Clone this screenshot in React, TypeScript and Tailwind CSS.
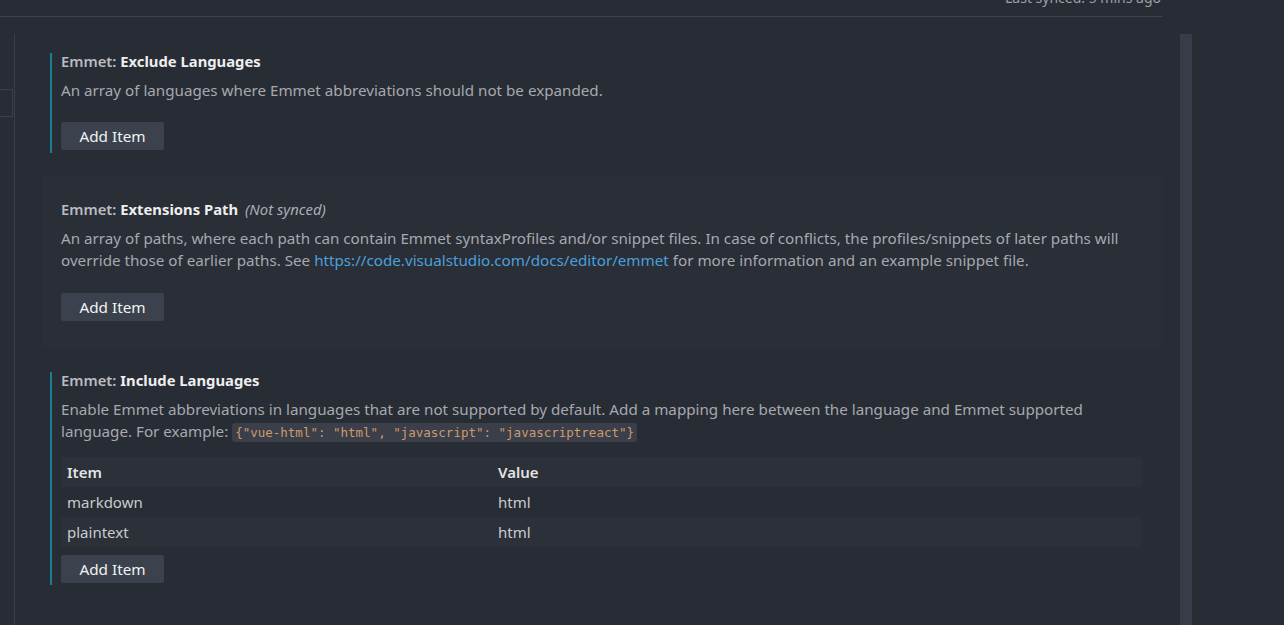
import React from "react";

const font = { fontFamily: '"Noto Sans", "Open Sans", sans-serif' };

const AddButton = () => (
  <button className="h-[28px] w-[103px] rounded-[2px] bg-[#3b414d] text-[15.3px] text-[#f2f2f2]">
    Add Item
  </button>
);

const Title = ({ name, extra }: { name: string; extra?: string }) => (
  <div className="h-[18px] text-[14.8px] font-semibold leading-[17px]">
    <span className="text-[#b9bcc2]">Emmet: </span>
    <span className="font-bold text-[#eeeeee]">{name}</span>
    {extra && <span className="ml-[7px] font-normal italic text-[#a9adb3]">{extra}</span>}
  </div>
);

const rows = [
  { item: "markdown", value: "html" },
  { item: "plaintext", value: "html" },
];

export default function App() {
  return (
    <div
      className="relative h-[625px] w-[1284px] overflow-hidden bg-[#282c34] text-[15.2px] text-[#a6a9af]"
      style={font}
    >
      {/* sync header */}
      <div className="h-[17px] w-[1162px] overflow-hidden border-b border-[#40444f]">
        <div className="-mt-[11px] pr-[1px] text-right text-[14px] leading-[18px] text-[#9da0a6]">
          Last synced: 5 mins ago
        </div>
      </div>

      <div className="flex h-full">
        {/* toc edge */}
        <div className="mt-[17px] w-[15px] shrink-0 border-r border-[#3a3e4a]">
          <div className="mt-[55px] h-[28px] w-[13px] border-y border-r border-[#3a3e4a]" />
        </div>

        {/* settings list */}
        <div className="w-[1165px] shrink-0 pl-[27px] pr-[17px] pt-[12px]">
          {/* exclude languages */}
          <div className="px-[8px] py-[24px]">
            <div className="flex h-[100px] flex-col border-l-2 border-[#1b7d99] pl-[9px]">
              <Title name="Exclude Languages" />
              <div className="mt-[8px] leading-[22px]">
                An array of languages where Emmet abbreviations should not be expanded.
              </div>
              <div className="mt-[21px]">
                <AddButton />
              </div>
            </div>
          </div>

          {/* extensions path */}
          <div className="bg-[#2a2e37] px-[8px] py-[24px]">
            <div className="flex h-[123px] flex-col border-l-2 border-transparent pl-[9px]">
              <Title name="Extensions Path" extra="(Not synced)" />
              <div className="mt-[8px] whitespace-nowrap leading-[22px]">
                An array of paths, where each path can contain Emmet syntaxProfiles and/or snippet files. In case of
                conflicts, the profiles/snippets of later paths will
                <br />
                override those of earlier paths. See{" "}
                <span className="text-[#4aa0dc]">https://code.visualstudio.com/docs/editor/emmet</span> for more
                information and an example snippet file.
              </div>
              <div className="mt-[22px]">
                <AddButton />
              </div>
            </div>
          </div>

          {/* include languages */}
          <div className="px-[8px] py-[24px]">
            <div className="flex h-[213px] flex-col border-l-2 border-[#1b7d99] pl-[9px]">
              <Title name="Include Languages" />
              <div className="mt-[8px] whitespace-nowrap leading-[22px]">
                Enable Emmet abbreviations in languages that are not supported by default. Add a mapping here between
                the language and Emmet supported
                <br />
                language. For example:{" "}
                <code
                  className="rounded-[3px] bg-[#3a3f4a] px-[3px] py-[2px] text-[12.5px] text-[#cf9a6c]"
                  style={{ fontFamily: '"DejaVu Sans Mono", "Liberation Mono", monospace' }}
                >
                  {'{"vue-html": "html", "javascript": "javascriptreact"}'}
                </code>
              </div>
              <div className="mt-[13px] w-[1081px] text-[15px]">
                <div className="grid h-[30px] grid-cols-[431px_1fr] items-center bg-[#2c3039] font-semibold text-[#e2e3e5]">
                  <div className="pl-[6px]">Item</div>
                  <div className="pl-[6px]">Value</div>
                </div>
                {rows.map((r, i) => (
                  <div
                    key={r.item}
                    className={
                      i % 2 === 1
                        ? "grid h-[30px] grid-cols-[431px_1fr] items-center bg-[#2c3039] text-[#c9cbcf]"
                        : "grid h-[30px] grid-cols-[431px_1fr] items-center text-[#c9cbcf]"
                    }
                  >
                    <div className="pl-[6px]">{r.item}</div>
                    <div className="pl-[6px]">{r.value}</div>
                  </div>
                ))}
              </div>
              <div className="mt-[8px]">
                <AddButton />
              </div>
            </div>
          </div>
        </div>

        {/* scrollbar */}
        <div className="mt-[17px] h-full w-[12px] shrink-0 bg-[#383c48]" />
      </div>
    </div>
  );
}
